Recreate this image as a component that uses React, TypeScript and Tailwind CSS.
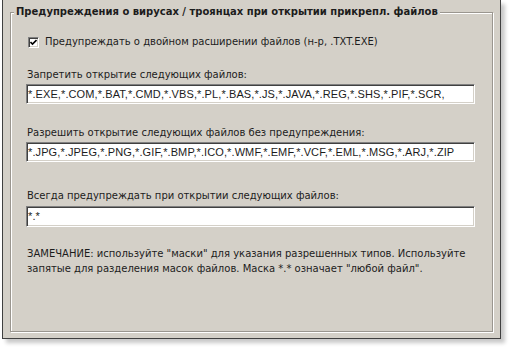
const font = { fontFamily: '"DejaVu Sans", "Liberation Sans", sans-serif' };

const sunken =
  'border border-t-[#808080] border-l-[#808080] border-b-white border-r-white shadow-[inset_1px_1px_0_#404040,inset_-1px_-1px_0_#d4d0c8] bg-white';

const MaskField = ({ value, tall }: { value: string; tall?: boolean }) => (
  <div className={`${sunken} ${tall ? 'h-[21px]' : 'h-[20px]'} w-[449px] overflow-hidden whitespace-nowrap pl-[1px] flex items-center`}>
    <span className="text-[11px] tracking-[0.1px] text-[#1c1c1c]" style={{ fontFamily: '"Liberation Sans", sans-serif' }}>
      {value}
    </span>
  </div>
);

export default function App() {
  return (
    <div className="w-[512px] h-[351px] bg-white" style={font}>
      <div className="ml-[2px] w-[499px] h-[339px] bg-[#d4d0c8] border-l border-r border-b border-[#404040] shadow-[4px_4px_4px_rgba(0,0,0,0.22)] pt-[12px] pl-[7px]">
        <div className="relative w-[483px] h-[320px] border border-[#9a968f] shadow-[inset_1px_1px_0_#ffffff,1px_1px_0_#ffffff] pl-[15px] text-[10px] text-[#1c1c1c]">
          <div className="absolute left-[3px] top-[-8px] h-[14px] px-[2px] bg-[#d4d0c8] font-bold leading-[14px]">
            Предупреждения о вирусах / троянцах при открытии прикрепл. файлов
          </div>

          <div className="mt-[22px] h-[14px] flex items-center gap-[6px] pl-[2px]">
            <div className={`${sunken} w-[11px] h-[11px] flex items-center justify-center`}>
              <svg width="7" height="7" viewBox="0 0 7 7">
                <path d="M0.5 3 L2.5 5 L6.5 1" stroke="#000" strokeWidth="1.6" fill="none" />
              </svg>
            </div>
            <span className="leading-[14px]">Предупреждать о двойном расширении файлов (н-р, .TXT.EXE)</span>
          </div>

          <div className="mt-[19px] h-[14px] leading-[14px] pl-[1px]">Запретить открытие следующих файлов:</div>
          <div className="mt-[2px]">
            <MaskField value="*.EXE,*.COM,*.BAT,*.CMD,*.VBS,*.PL,*.BAS,*.JS,*.JAVA,*.REG,*.SHS,*.PIF,*.SCR," />
          </div>

          <div className="mt-[22px] h-[14px] leading-[14px] pl-[1px]">Разрешить открытие следующих файлов без предупреждения:</div>
          <div className="mt-[2px]">
            <MaskField value="*.JPG,*.JPEG,*.PNG,*.GIF,*.BMP,*.ICO,*.WMF,*.EMF,*.VCF,*.EML,*.MSG,*.ARJ,*.ZIP" />
          </div>

          <div className="mt-[27px] h-[14px] leading-[14px] pl-[1px]">Всегда предупреждать при открытии следующих файлов:</div>
          <div className="mt-[3px]">
            <MaskField value="*.*" tall />
          </div>

          <p className="mt-[19px] leading-[15px] pl-[1px] w-[440px]">
            ЗАМЕЧАНИЕ: используйте "маски" для указания разрешенных типов. Используйте запятые для разделения масок файлов. Маска *.* означает "любой файл".
          </p>
        </div>
      </div>
    </div>
  );
}
